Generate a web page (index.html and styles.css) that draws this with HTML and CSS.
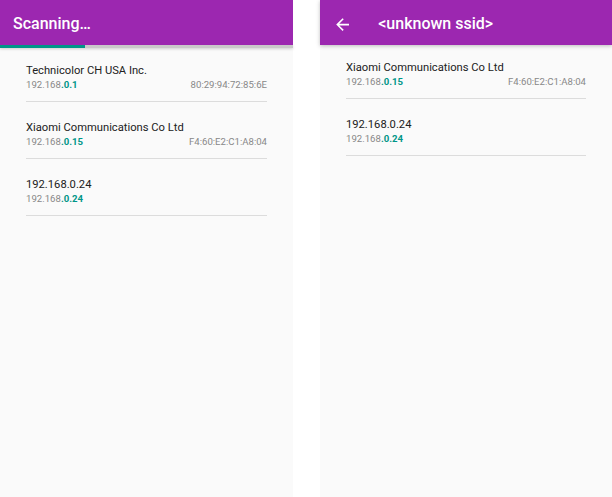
FILE: index.html
```html
<!DOCTYPE html>
<html>
<head>
<meta charset="utf-8">
<link rel="stylesheet" href="styles.css">
</head>
<body>
<div class="screens">
  <div class="screen screen-left">
    <div class="toolbar">
      <span class="title title-plain">Scanning…</span>
    </div>
    <div class="progress"><div class="progress-fill" style="width:85px"></div></div>
    <div class="list">
      <div class="item">
        <div class="name">Technicolor CH USA Inc.</div>
        <div class="sub"><span class="ip">192.168<b>.0.1</b></span><span class="mac">80:29:94:72:85:6E</span></div>
      </div>
      <div class="item">
        <div class="name">Xiaomi Communications Co Ltd</div>
        <div class="sub"><span class="ip">192.168<b>.0.15</b></span><span class="mac">F4:60:E2:C1:A8:04</span></div>
      </div>
      <div class="item">
        <div class="name">192.168.0.24</div>
        <div class="sub"><span class="ip">192.168<b>.0.24</b></span></div>
      </div>
    </div>
  </div>
  <div class="screen screen-right">
    <div class="toolbar">
      <svg class="back" viewBox="0 0 24 24" width="19.2" height="19.2"><path fill="#fff" d="M20 11H7.830l5.590-5.590L12 4l-8 8 8 8 1.410-1.410L7.830 13H20v-2z"/></svg>
      <span class="title title-nav">&lt;unknown ssid&gt;</span>
    </div>
    <div class="list">
      <div class="item">
        <div class="name">Xiaomi Communications Co Ltd</div>
        <div class="sub"><span class="ip">192.168<b>.0.15</b></span><span class="mac">F4:60:E2:C1:A8:04</span></div>
      </div>
      <div class="item">
        <div class="name">192.168.0.24</div>
        <div class="sub"><span class="ip">192.168<b>.0.24</b></span></div>
      </div>
    </div>
  </div>
</div>
</body>
</html>
```

FILE: styles.css
```css
html, body {
  margin: 0;
  padding: 0;
  background: #ffffff;
  font-family: Roboto, "Noto Sans", sans-serif;
}
.screens {
  display: flex;
  gap: 27px;
  height: 497px;
}
.screen {
  background: #fafafa;
  height: 497px;
  display: flex;
  flex-direction: column;
}
.screen-left { width: 293px; }
.screen-right { width: 292px; }
.toolbar {
  position: relative;
  z-index: 2;
  height: 45px;
  box-sizing: border-box;
  background: #9c27b0;
  display: flex;
  align-items: flex-start;
  flex-shrink: 0;
}
.screen-right .toolbar {
  box-shadow: 0 1px 4px rgba(0,0,0,0.25);
}
.title {
  color: #fff;
  font-size: 16px;
  font-weight: 500;
  line-height: 24px;
  padding-top: 12px;
  white-space: nowrap;
}
.title-plain { margin-left: 13px; }
.back {
  margin-left: 13px;
  margin-top: 14.5px;
  flex-shrink: 0;
}
.title-nav { margin-left: 26px; }
.progress {
  height: 3px;
  background: #c9c9c9;
  flex-shrink: 0;
  position: relative;
  z-index: 1;
  box-shadow: 0 1px 3px rgba(0,0,0,0.18);
}
.progress-fill {
  height: 3px;
  background: #009688;
}
.list {
  padding: 0 26px 0 26px;
}
.item {
  padding: 19px 0 9px 0;
  border-bottom: 1px solid #dcdcdc;
}
.item:first-child { padding-top: 16px; }
.name {
  font-size: 11.2px;
  line-height: 14px;
  color: #212121;
  white-space: nowrap;
}
.sub {
  display: flex;
  justify-content: space-between;
  font-size: 9.6px;
  line-height: 14px;
  color: #888888;
  white-space: nowrap;
}
.ip b {
  color: #009688;
  font-weight: 700;
}
```
